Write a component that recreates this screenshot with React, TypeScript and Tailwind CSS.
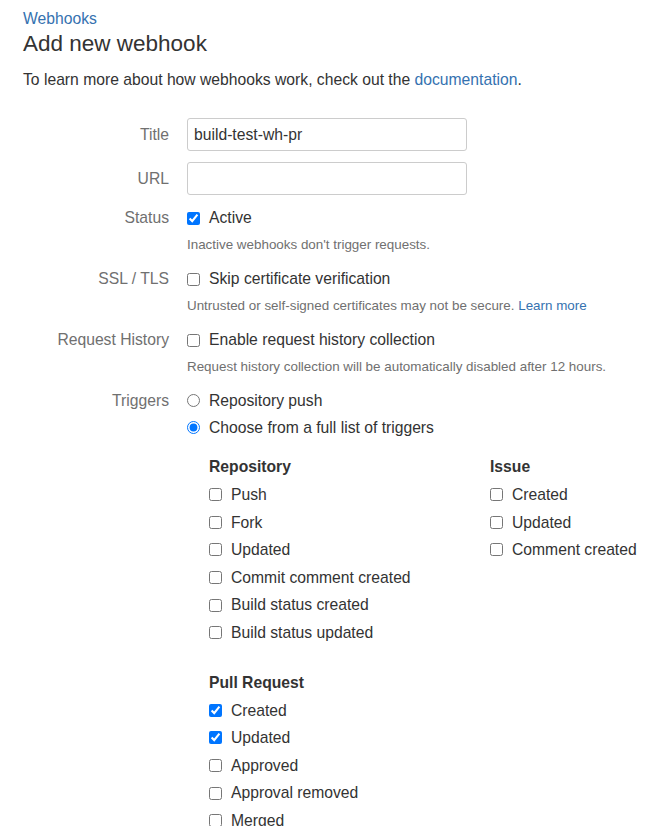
import type { ReactNode } from "react";

const font = { fontFamily: '"Liberation Sans", Arial, Helvetica, sans-serif' };

function FieldRow({ label, children, className = "" }: { label: string; children: ReactNode; className?: string }) {
  return (
    <div className={`flex ${className}`}>
      <div className="w-[146px] shrink-0 text-right text-[#707070] h-[24px] leading-[24px]">{label}</div>
      <div className="ml-[18px] flex-1">{children}</div>
    </div>
  );
}

function Check({ label, checked = false, h = "h-[24px]" }: { label: string; checked?: boolean; h?: string }) {
  return (
    <label className={`flex items-center ${h}`}>
      <input type="checkbox" defaultChecked={checked} className="m-0 size-[13px] shrink-0" />
      <span className="ml-[9px]">{label}</span>
    </label>
  );
}

function Radio({ label, checked = false }: { label: string; checked?: boolean }) {
  return (
    <label className="flex items-center h-[27px]">
      <input type="radio" name="triggers" defaultChecked={checked} className="m-0 size-[13px] shrink-0" />
      <span className="ml-[9px]">{label}</span>
    </label>
  );
}

function Help({ children }: { children: ReactNode }) {
  return <div className="mt-[5px] h-[20px] leading-[20px] text-[13.4px] text-[#707070]">{children}</div>;
}

function Group({ title, items, className = "" }: { title: string; items: { label: string; checked?: boolean }[]; className?: string }) {
  return (
    <div className={className}>
      <div className="h-[24px] leading-[24px] font-bold">{title}</div>
      <div className="mt-[2px]">
        {items.map((it) => (
          <Check key={it.label} label={it.label} checked={it.checked} h="h-[27.6px]" />
        ))}
      </div>
    </div>
  );
}

export default function App() {
  return (
    <div className="bg-white px-[23px] pt-[9px] text-[15.7px] text-[#333333] overflow-hidden h-[826px]" style={font}>
      <a className="block h-[20px] leading-[20px] text-[#3572b0]">Webhooks</a>
      <h1 className="mt-[1px] h-[28px] leading-[28px] text-[22.5px] text-[#333333]">Add new webhook</h1>
      <p className="mt-[11px] h-[22px] leading-[22px]">
        To learn more about how webhooks work, check out the <a className="text-[#3572b0]">documentation</a>.
      </p>

      <form className="mt-[27px]">
        <div className="flex items-center h-[33px]">
          <div className="w-[146px] shrink-0 text-right text-[#707070]">Title</div>
          <input
            defaultValue="build-test-wh-pr"
            className="ml-[18px] w-[280px] h-[33px] border border-[#cccccc] rounded-[3px] px-[6px] outline-none text-[#333333]"
          />
        </div>
        <div className="flex items-center h-[33px] mt-[11px]">
          <div className="w-[146px] shrink-0 text-right text-[#707070]">URL</div>
          <input className="ml-[18px] w-[280px] h-[33px] border border-[#cccccc] rounded-[3px] px-[6px] outline-none" />
        </div>

        <FieldRow label="Status" className="mt-[11px]">
          <Check label="Active" checked />
          <Help>Inactive webhooks don't trigger requests.</Help>
        </FieldRow>

        <FieldRow label="SSL / TLS" className="mt-[12px]">
          <Check label="Skip certificate verification" />
          <Help>
            Untrusted or self-signed certificates may not be secure. <a className="text-[#3572b0]">Learn more</a>
          </Help>
        </FieldRow>

        <FieldRow label="Request History" className="mt-[12px]">
          <Check label="Enable request history collection" />
          <Help>Request history collection will be automatically disabled after 12 hours.</Help>
        </FieldRow>

        <div className="flex mt-[10px]">
          <div className="w-[146px] shrink-0 text-right text-[#707070] h-[27px] leading-[27px]">Triggers</div>
          <div className="ml-[18px] flex-1">
            <Radio label="Repository push" />
            <Radio label="Choose from a full list of triggers" checked />

            <div className="ml-[22px] mt-[14px]">
              <div className="flex">
                <Group
                  className="w-[281px]"
                  title="Repository"
                  items={[
                    { label: "Push" },
                    { label: "Fork" },
                    { label: "Updated" },
                    { label: "Commit comment created" },
                    { label: "Build status created" },
                    { label: "Build status updated" },
                  ]}
                />
                <Group
                  title="Issue"
                  items={[{ label: "Created" }, { label: "Updated" }, { label: "Comment created" }]}
                />
              </div>
              <Group
                className="mt-[24px]"
                title="Pull Request"
                items={[
                  { label: "Created", checked: true },
                  { label: "Updated", checked: true },
                  { label: "Approved" },
                  { label: "Approval removed" },
                  { label: "Merged" },
                ]}
              />
            </div>
          </div>
        </div>
      </form>
    </div>
  );
}
